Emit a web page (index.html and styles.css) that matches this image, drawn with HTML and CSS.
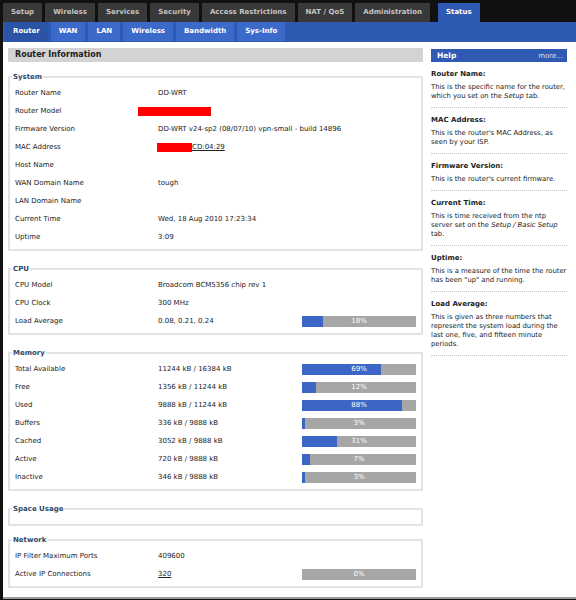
FILE: index.html
```html
<!DOCTYPE html>
<html lang="en">
<head>
    <meta charset="UTF-8">
    <title>DD-WRT Status: Router</title>
    <link rel="stylesheet" href="styles.css">
</head>
<body>
    <div class="page">
        <div class="tabs">
            <a class="tab">Setup</a>
            <a class="tab">Wireless</a>
            <a class="tab">Services</a>
            <a class="tab">Security</a>
            <a class="tab">Access Restrictions</a>
            <a class="tab">NAT / QoS</a>
            <a class="tab">Administration</a>
            <a class="tab tab-active">Status</a>
        </div>
        <div class="subtabs">
            <a class="subtab subtab-active">Router</a>
            <a class="subtab">WAN</a>
            <a class="subtab">LAN</a>
            <a class="subtab">Wireless</a>
            <a class="subtab">Bandwidth</a>
            <a class="subtab">Sys-Info</a>
        </div>

        <div class="main">
            <div class="content">
                <div class="title">Router Information</div>

                <fieldset class="first">
                    <legend>System</legend>
                    <div class="row"><span>Router Name</span><span>DD-WRT</span></div>
                    <div class="row"><span>Router Model</span><span><i class="redact redact-model"></i></span></div>
                    <div class="row"><span>Firmware Version</span><span>DD-WRT v24-sp2 (08/07/10) vpn-small - build 14896</span></div>
                    <div class="row"><span>MAC Address</span><span><i class="redact redact-mac"></i><u>CD:04:29</u></span></div>
                    <div class="row"><span>Host Name</span><span></span></div>
                    <div class="row"><span>WAN Domain Name</span><span>tough</span></div>
                    <div class="row"><span>LAN Domain Name</span><span></span></div>
                    <div class="row"><span>Current Time</span><span>Wed, 18 Aug 2010 17:23:34</span></div>
                    <div class="row"><span>Uptime</span><span>3:09</span></div>
                </fieldset>

                <fieldset>
                    <legend>CPU</legend>
                    <div class="row"><span>CPU Model</span><span>Broadcom BCM5356 chip rev 1</span></div>
                    <div class="row"><span>CPU Clock</span><span>300 MHz</span></div>
                    <div class="row">
                        <span>Load Average</span><span>0.08, 0.21, 0.24</span>
                        <div class="bar"><div class="fill" style="width: 18%"></div><div class="pct">18%</div></div>
                    </div>
                </fieldset>

                <fieldset>
                    <legend>Memory</legend>
                    <div class="row">
                        <span>Total Available</span><span>11244 kB / 16384 kB</span>
                        <div class="bar"><div class="fill" style="width: 69%"></div><div class="pct">69%</div></div>
                    </div>
                    <div class="row">
                        <span>Free</span><span>1356 kB / 11244 kB</span>
                        <div class="bar"><div class="fill" style="width: 12%"></div><div class="pct">12%</div></div>
                    </div>
                    <div class="row">
                        <span>Used</span><span>9888 kB / 11244 kB</span>
                        <div class="bar"><div class="fill" style="width: 88%"></div><div class="pct">88%</div></div>
                    </div>
                    <div class="row">
                        <span>Buffers</span><span>336 kB / 9888 kB</span>
                        <div class="bar"><div class="fill" style="width: 3%"></div><div class="pct">3%</div></div>
                    </div>
                    <div class="row">
                        <span>Cached</span><span>3052 kB / 9888 kB</span>
                        <div class="bar"><div class="fill" style="width: 31%"></div><div class="pct">31%</div></div>
                    </div>
                    <div class="row">
                        <span>Active</span><span>720 kB / 9888 kB</span>
                        <div class="bar"><div class="fill" style="width: 7%"></div><div class="pct">7%</div></div>
                    </div>
                    <div class="row">
                        <span>Inactive</span><span>346 kB / 9888 kB</span>
                        <div class="bar"><div class="fill" style="width: 3%"></div><div class="pct">3%</div></div>
                    </div>
                </fieldset>

                <fieldset class="empty">
                    <legend>Space Usage</legend>
                </fieldset>

                <fieldset class="network">
                    <legend>Network</legend>
                    <div class="row"><span>IP Filter Maximum Ports</span><span>409600</span></div>
                    <div class="row">
                        <span>Active IP Connections</span><span><u>320</u></span>
                        <div class="bar"><div class="fill" style="width: 0%"></div><div class="pct">0%</div></div>
                    </div>
                </fieldset>
            </div>

            <div class="help">
                <div class="help-head"><b>Help</b><span>more...</span></div>
                <div class="help-item">
                    <h4>Router Name:</h4>
                    <p>This is the specific name for the router,<br>which you set on the <em>Setup</em> tab.</p>
                </div>
                <div class="help-item">
                    <h4>MAC Address:</h4>
                    <p>This is the router's MAC Address, as seen by your ISP.</p>
                </div>
                <div class="help-item">
                    <h4>Firmware Version:</h4>
                    <p>This is the router's current firmware.</p>
                </div>
                <div class="help-item">
                    <h4>Current Time:</h4>
                    <p>This is time received from the ntp<br>server set on the <em>Setup / Basic Setup</em><br>tab.</p>
                </div>
                <div class="help-item">
                    <h4>Uptime:</h4>
                    <p>This is a measure of the time the router has been "up" and running.</p>
                </div>
                <div class="help-item">
                    <h4>Load Average:</h4>
                    <p>This is given as three numbers that represent the system load during the last one, five, and fifteen minute periods.</p>
                </div>
            </div>
        </div>
    </div>
</body>
</html>
```

FILE: styles.css
```css
body {
    margin: 0;
    background-color: #111;
    font-family: "DejaVu Sans", Verdana, sans-serif;
    font-size: 7px;
    color: #222;
}

.page {
    margin-left: 3px;
}

.tabs {
    display: flex;
    gap: 3px;
    padding-top: 3px;
    height: 19px;
}

.tab {
    padding: 0 8px;
    line-height: 19px;
    background-color: #393939;
    color: #c4c4c4;
    font-weight: bold;
}

.tab-active {
    margin-left: 5px;
    background-color: #2e5ab3;
    color: #fff;
}

.subtabs {
    display: flex;
    gap: 3px;
    height: 20px;
    padding-left: 2px;
    background-color: #2e5ab3;
}

.subtab {
    padding: 0 8px;
    height: 19px;
    line-height: 19px;
    background-color: #3c6acb;
    color: #fff;
    font-weight: bold;
}

.subtab-active {
    background-color: #2b54a6;
}

.main {
    display: flex;
    gap: 8px;
    padding: 6px 9px 9px 5px;
    background-color: #fff;
    border-bottom: 2px solid #9a9a9a;
}

.content {
    width: 415px;
}

.title {
    height: 14px;
    line-height: 14px;
    padding-left: 7px;
    background-color: #d3d3d3;
    font-size: 8px;
    font-weight: bold;
    color: #222;
}

fieldset {
    margin: 13px 0 0;
    padding: 2px 5px 3px;
    border: 2px solid #e3e3e3;
}

fieldset.first {
    margin-top: 10px;
}

fieldset.empty {
    padding-bottom: 8px;
}

fieldset.network {
    margin-top: 9px;
}

legend {
    margin-left: -3px;
    padding: 0 1px;
    line-height: 10px;
    font-weight: bold;
    color: #2c486a;
}

.row {
    display: grid;
    grid-template-columns: 143px 144px 114px;
    align-items: center;
    height: 18px;
    white-space: nowrap;
}

.redact {
    display: inline-block;
    height: 9px;
    background-color: #f00;
    vertical-align: middle;
}

.redact-model {
    width: 73px;
    margin-left: -20px;
}

.redact-mac {
    width: 35px;
    margin-left: -1px;
}

.bar {
    display: grid;
    height: 11px;
    background-color: #a6a6a6;
}

.fill,
.pct {
    grid-area: 1 / 1;
}

.fill {
    background-color: #3d65c6;
}

.pct {
    color: #fff;
    text-align: center;
    line-height: 11px;
}

.help {
    width: 136px;
    padding-top: 1px;
}

.help-head {
    display: flex;
    justify-content: space-between;
    align-items: center;
    height: 13px;
    padding: 0 4px 0 6px;
    background-color: #2e5ab3;
    color: #fff;
}

.help-head b {
    font-size: 7.5px;
}

.help-head span {
    color: #d8dff0;
}

.help-item {
    padding: 8px 0 6px;
    border-bottom: 1px dotted #c4c4c4;
}

.help-item h4 {
    margin: 0 0 4px;
    font-size: 7px;
    line-height: 9px;
}

.help-item p {
    margin: 0;
    font-size: 6.8px;
    line-height: 9px;
}
```
